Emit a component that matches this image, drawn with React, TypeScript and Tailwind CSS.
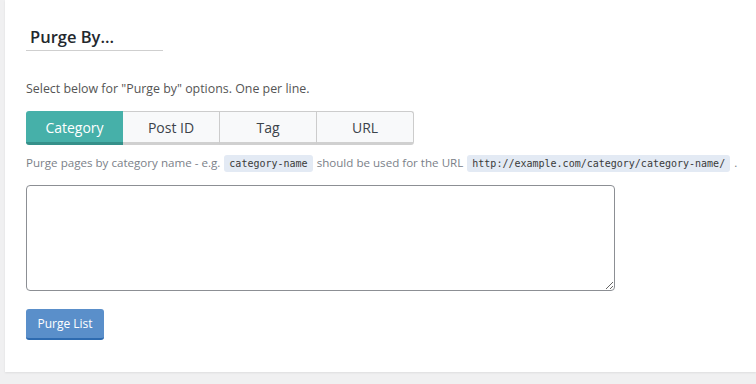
export default function App() {
  const tabs = ["Category", "Post ID", "Tag", "URL"]
  return (
    <div className="min-h-screen bg-[#f0f0f1] pl-[5px] font-['Open_Sans',sans-serif]">
      <div className="h-[372px] bg-white shadow-[0_1px_2px_rgba(0,0,0,0.08)] pl-[21px] pt-[25px]">
        {/* Section heading */}
        <h3 className="w-[137px] border-b border-[#cfcfcf] pl-[4px] pb-[1px] text-[16.5px] font-semibold leading-[24px] text-[#23282d]">
          Purge By...
        </h3>

        <p className="mt-[29px] text-[12.4px] leading-[18px] text-[#555]">
          Select below for "Purge by" options. One per line.
        </p>

        {/* Tabs */}
        <div className="mt-[13px] flex w-[388px]">
          {tabs.map((t, i) =>
            i === 0 ? (
              <div
                key={t}
                className="flex h-[34px] w-[97px] items-center justify-center rounded-l-[3px] border-b-[3px] border-[#35908a] bg-[#46b0a9] pt-[2px] text-[14px] text-white"
              >
                {t}
              </div>
            ) : (
              <div
                key={t}
                className={
                  i === tabs.length - 1
                    ? "flex h-[34px] w-[97px] items-center justify-center rounded-r-[3px] border border-b-[3px] border-l-0 border-[#cccccc] border-b-[#d0d0d0] bg-[#f8f9fa] text-[14px] text-[#3c434a]"
                    : "flex h-[34px] w-[97px] items-center justify-center border border-b-[3px] border-l-0 border-[#cccccc] border-b-[#d0d0d0] bg-[#f8f9fa] text-[14px] text-[#3c434a]"
                }
              >
                {t}
              </div>
            )
          )}
        </div>

        <p className="mt-[7px] whitespace-nowrap text-[11.6px] leading-[22px] text-[#7b8189]">
          Purge pages by category name - e.g.
          <code className="mx-[4px] rounded-[3px] bg-[#e3eaf4] px-[5px] py-[3px] font-['DejaVu_Sans_Mono',monospace] text-[10px] text-[#3a3a3a]">
            category-name
          </code>
          should be used for the URL
          <code className="mx-[4px] rounded-[3px] bg-[#e3eaf4] px-[5px] py-[3px] font-['DejaVu_Sans_Mono',monospace] text-[10px] text-[#3a3a3a]">
            http://example.com/category/category-name/
          </code>
          .
        </p>

        <textarea className="mt-[10px] block h-[106px] w-[589px] rounded-[4px] border border-[#8c8f94] bg-white" />

        <button className="mt-[18px] h-[31px] w-[78px] rounded-[3px] border-b-[2px] border-[#2e6bb0] bg-[#5a8fca] text-[12px] text-white">
          Purge List
        </button>
      </div>
    </div>
  )
}
